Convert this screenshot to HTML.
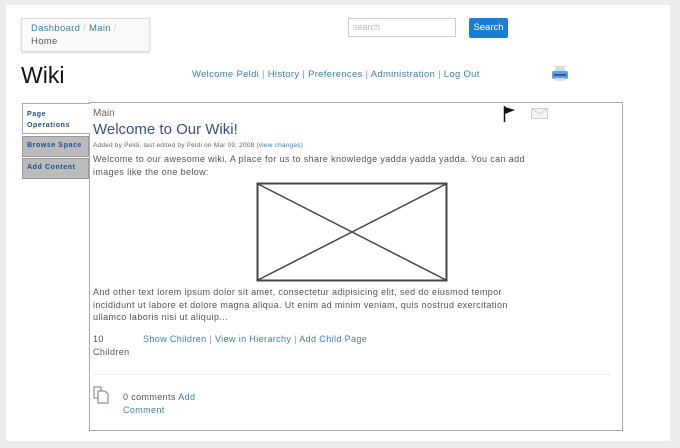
<!DOCTYPE html>
<html><head><style>
*{margin:0;padding:0;box-sizing:border-box}
body{width:680px;height:448px;background:#ececec;font-family:"Liberation Sans",sans-serif;position:relative;overflow:hidden;color:#555}
.panel{position:absolute;left:6px;top:5px;width:664px;height:436px;background:#fff}
.a{position:absolute;white-space:nowrap}
.lk{color:#3a7fb0}
.t{font-size:9px;color:#555;line-height:12.5px;letter-spacing:0.38px}
</style></head><body>
<div class="panel"></div>
<div class="a" style="left:21px;top:18px;width:129px;height:34px;border:1px solid #ddd;background:#fafafa;box-shadow:0 1px 2px #ddd"></div>
<div class="a t" style="left:31px;top:22px;font-size:9.5px;line-height:13px;letter-spacing:0.3px"><span class="lk">Dashboard</span> <span style="color:#ccc">/</span> <span class="lk">Main</span> <span style="color:#ccc">/</span><br>Home</div>
<div class="a" style="left:348px;top:18px;width:108px;height:19px;border:1px solid #ccc;font-size:9px;color:#bbb;padding:3px 4px">search</div>
<div class="a" style="left:469px;top:18px;width:39px;height:20px;background:#1a7fd4;border-radius:2px;color:#fff;font-size:9.5px;text-align:center;line-height:20px">Search</div>
<div class="a" style="left:21px;top:62px;font-size:23px;color:#111">Wiki</div>
<div class="a lk" style="left:192px;top:69px;font-size:9.5px;letter-spacing:0.3px">Welcome Peldi <span style="color:#999">|</span> History <span style="color:#999">|</span> Preferences <span style="color:#999">|</span> Administration <span style="color:#999">|</span> Log Out</div>
<svg class="a" style="left:551px;top:66px" width="18" height="16"><rect x="4" y="0" width="10" height="6" fill="#cde"/><rect x="1" y="5" width="16" height="8" rx="2" fill="#6a9ed6"/><rect x="3" y="8" width="12" height="2" fill="#1a5fb4"/><rect x="4" y="12" width="10" height="3" fill="#dde"/></svg>
<div class="a" style="left:89px;top:102px;width:534px;height:329px;border:1px solid #aaa;background:#fff"></div>
<div class="a" style="left:22px;top:103px;width:68px;height:31px;border:1px solid #aaa;border-right:none;background:#fff;font-size:7px;font-weight:bold;color:#1a4f8f;padding:5px 4px;line-height:11px;letter-spacing:0.6px">Page<br>Operations</div>
<div class="a" style="left:22px;top:136px;width:67px;height:21px;border:1px solid #999;background:#bbb;font-size:7px;font-weight:bold;color:#1a4f8f;padding:5px 4px;letter-spacing:0.6px">Browse Space</div>
<div class="a" style="left:22px;top:158px;width:67px;height:21px;border:1px solid #999;background:#bbb;font-size:7px;font-weight:bold;color:#1a4f8f;padding:5px 4px;letter-spacing:0.6px">Add Content</div>
<svg class="a" style="left:503px;top:106px" width="14" height="16"><line x1="1.5" y1="0" x2="1.5" y2="16" stroke="#111" stroke-width="1.5"/><path d="M2 1 L12 4 L2 8Z" fill="#111"/></svg>
<svg class="a" style="left:531px;top:108px" width="17" height="11"><rect x="0.5" y="0.5" width="16" height="10" fill="#f4f4f4" stroke="#ccc"/><path d="M0.5 0.5 L8.5 6 L16.5 0.5" fill="none" stroke="#ccc"/></svg>
<div class="a" style="left:93px;top:108px;font-size:10px;color:#666">Main</div>
<div class="a" style="left:93px;top:121px;font-size:15px;color:#3a4f8f">Welcome to Our Wiki!</div>
<div class="a" style="left:93px;top:142px;font-size:6.5px;color:#666;letter-spacing:0.2px">Added by Peldi, last edited by Peldi on Mar 09, 2008 <span class="lk">(view changes)</span></div>
<div class="a t" style="left:93px;top:153px">Welcome to our awesome wiki. A place for us to share knowledge yadda yadda yadda. You can add<br>images like the one below:</div>
<svg class="a" style="left:256px;top:182px" width="192" height="100"><rect x="1.5" y="1.5" width="189" height="97" fill="#fff" stroke="#444" stroke-width="2"/><path d="M2 2 L190 98 M190 2 L2 98" stroke="#444" stroke-width="1.5"/></svg>
<div class="a t" style="left:93px;top:286px">And other text lorem ipsum dolor sit amet, consectetur adipisicing elit, sed do eiusmod tempor<br>incididunt ut labore et dolore magna aliqua. Ut enim ad minim veniam, quis nostrud exercitation<br>ullamco laboris nisi ut aliquip...</div>
<div class="a t" style="left:93px;top:333px">10<br>Children</div>
<div class="a t lk" style="left:143px;top:333px;color:#3a7fb0">Show Children <span style="color:#999">|</span> View in Hierarchy <span style="color:#999">|</span> Add Child Page</div>
<div class="a" style="left:93px;top:374px;width:519px;height:1px;background:#eee"></div>
<svg class="a" style="left:93px;top:386px" width="18" height="18"><path d="M1 1 H8 V12 H1Z" fill="#fff" stroke="#777"/><path d="M5 5 H12 L15 8 V17 H5Z" fill="#fff" stroke="#777"/></svg>
<div class="a t" style="left:123px;top:391px">0 comments <span class="lk">Add</span><br><span class="lk">Comment</span></div>
</body></html>
